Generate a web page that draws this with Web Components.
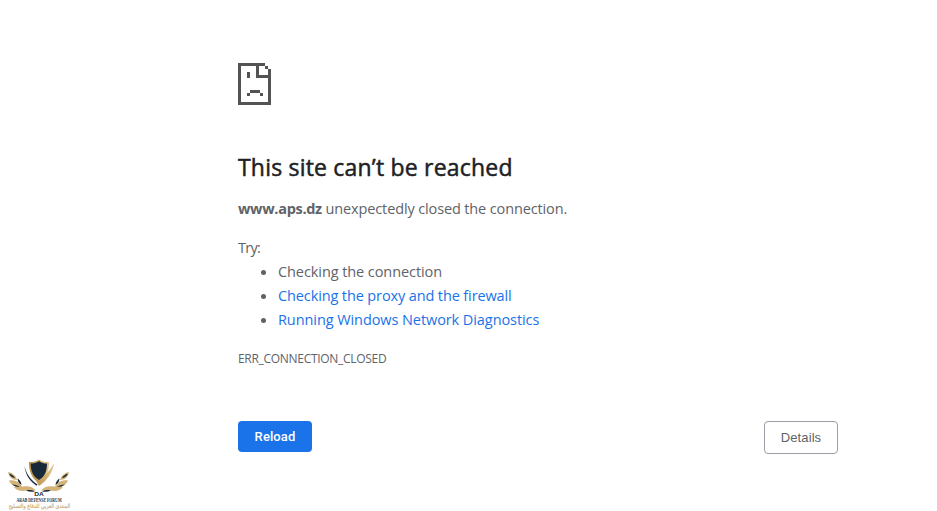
<!DOCTYPE html>
<html lang="en">
<head>
<meta charset="utf-8">
<title>www.aps.dz</title>
<style>
  body {
    background-color: #ffffff;
    color: #5f6368;
    font-family: 'Open Sans', 'Noto Sans', sans-serif;
    margin: 0;
  }
</style>
</head>
<body>
<net-error-page>
  <sad-page slot="icon"></sad-page>
  <span slot="title">This site can’t be reached</span>
  <net-message slot="summary"><strong>www.aps.dz</strong> unexpectedly closed the connection.</net-message>
  <net-suggestions slot="suggestions">
    <net-suggestion style="--spacing: -0.08px">Checking the connection</net-suggestion>
    <net-suggestion link style="--spacing: -0.12px">Checking the proxy and the firewall</net-suggestion>
    <net-suggestion link style="--spacing: -0.08px">Running Windows Network Diagnostics</net-suggestion>
  </net-suggestions>
  <span slot="code">ERR_CONNECTION_CLOSED</span>
  <net-button slot="actions" primary>Reload</net-button>
  <net-button slot="actions">Details</net-button>
</net-error-page>
<forum-mark></forum-mark>

<script>
class NetElement extends HTMLElement {
  constructor() {
    super();

    const template = document.createElement( 'template' );
    template.innerHTML = this.constructor.markup;

    // Root
    const shadowRoot = this.attachShadow( {mode: 'open'} );
    shadowRoot.appendChild( template.content.cloneNode( true ) );
  }
}

class NetErrorPage extends NetElement {
  static markup = /* template */ `
    <style>
      :host {
        box-sizing: border-box;
        display: block;
        margin: 0 99px 0 auto;
        padding-top: 63px;
        width: 600px;
      }

      h1 {
        color: #202124;
        font-size: 23px;
        font-weight: 400;
        letter-spacing: 0.2px;
        line-height: 30px;
        margin: 47px 0 15px;
        white-space: nowrap;
        -webkit-text-stroke: 0.5px #202124;
      }

      .code {
        font-size: 12px;
        letter-spacing: -0.3px;
        line-height: 18px;
        margin-top: 18px;
      }

      nav {
        align-items: flex-start;
        display: flex;
        justify-content: space-between;
        margin-top: 53px;
      }
    </style>
    <slot name="icon"></slot>
    <h1><slot name="title"></slot></h1>
    <slot name="summary"></slot>
    <slot name="suggestions"></slot>
    <div class="code"><slot name="code"></slot></div>
    <nav><slot name="actions"></slot></nav>
  `;
}

// Document with a folded corner
class SadPage extends NetElement {
  static markup = /* template */ `
    <style>
      :host {
        display: block;
        height: 42px;
        width: 33px;
      }

      svg {
        display: block;
      }
    </style>
    <svg width="33" height="42" viewBox="0 0 33 42" fill="#535353" shape-rendering="crispEdges">
      <path d="M0 0h27v3h-6v9h12v3H18V3H3v36h27V15h3v27H0z"/>
      <path d="M27 3h3v3h-3zM30 6h3v9h-3zM9 9h3v6H9zM12 27h10v3H12zM9 30h3v3H9zM22 30h3v3h-3z"/>
    </svg>
  `;
}

class NetMessage extends NetElement {
  static markup = /* template */ `
    <style>
      :host {
        display: block;
        font-size: 14.5px;
        letter-spacing: -0.13px;
        line-height: 24px;
        white-space: nowrap;
      }

      ::slotted( strong ) {
        font-weight: 700;
        letter-spacing: -0.3px;
      }
    </style>
    <slot></slot>
  `;
}

class NetSuggestions extends NetElement {
  static markup = /* template */ `
    <style>
      :host {
        display: block;
        font-size: 14.5px;
        line-height: 24px;
        margin-top: 15px;
      }

      p {
        letter-spacing: -0.7px;
        margin: 0;
      }

      .list {
        display: flex;
        flex-direction: column;
        padding-left: 23px;
      }
    </style>
    <p>Try:</p>
    <div class="list" role="list"><slot></slot></div>
  `;
}

class NetSuggestion extends NetElement {
  static markup = /* template */ `
    <style>
      :host {
        align-items: center;
        display: flex;
        gap: 12px;
        letter-spacing: var( --spacing, normal );
        white-space: nowrap;
      }

      :host( [link] ) .text {
        color: #1a73e8;
      }

      i {
        background-color: #5f6368;
        border-radius: 50%;
        height: 5px;
        margin-top: 1px;
        width: 5px;
      }
    </style>
    <i></i>
    <span class="text"><slot></slot></span>
  `;
}

class NetButton extends NetElement {
  static markup = /* template */ `
    <style>
      :host {
        display: block;
      }

      button {
        background-color: #ffffff;
        border: 1px solid #9aa0a6;
        border-radius: 4px;
        box-sizing: border-box;
        color: #5f6368;
        display: block;
        font: 400 13px 'Liberation Sans', Arial, sans-serif;
        height: 33px;
        letter-spacing: 0.1px;
        padding: 0;
        width: 74px;
      }

      :host( [primary] ) button {
        background-color: #1a73e8;
        border: none;
        color: #ffffff;
        font-family: Roboto, sans-serif;
        font-weight: 500;
        height: 31px;
      }
    </style>
    <button><slot></slot></button>
  `;
}

// Shield between two laurel wings, pinned over the page's lower left corner
class ForumMark extends NetElement {
  static markup = /* template */ `
    <style>
      :host {
        display: block;
        left: 0;
        position: absolute;
        top: 456px;
      }

      svg {
        display: block;
      }
    </style>
    <svg width="80" height="55" viewBox="0 456 80 55">
      <defs>
        <linearGradient id="gold" x1="0" x2="1">
          <stop offset="0" stop-color="#b98d45"/>
          <stop offset="1" stop-color="#e3c78d"/>
        </linearGradient>
        <g id="wing">
          <path fill="#d3b377" d="M8 472c5 1 8 4 9 8-5 0-8-3-9-8zM9 480.500c6-1 10 1 13 6-6 1-11-1-13-6zM14 487c5-2 11-1 14 3-6 2-11 1-14-3zM23 486.500c5-1 10 0 13 4-5 .5-10-.5-13-4z"/>
          <path fill="#182a38" d="M9 473.500c3 1 5 2.500 6 4.500-3-.5-5-2-6-4.500zM17.500 478.500c2.500 1.500 4 4 4 6.500-2.500-1.500-4-4-4-6.500zM12 484.500c3 0 6 1 8 2.500-3 0-6-.8-8-2.500zM26 490.500c3-.7 6-.7 9 .7-3 1-6 .5-9-.7z"/>
        </g>
      </defs>
      <use href="#wing"/>
      <use href="#wing" transform="matrix(-1 0 0 1 77 0)"/>
      <path fill="url(#gold)" d="M29 462c4 .3 7-.5 10-2.500 3 2 6 2.800 10 2.500 0 9-2 16-10 21-8-5-10-12-10-21z"/>
      <path fill="#182a38" d="M30.700 463.500c3 0 6-.7 8.300-2.300 2.300 1.600 5 2.300 8 2.300 0 7-2 13-8 17.500-6-4.500-8.300-10.500-8.300-17.500z"/>
      <path fill="url(#gold)" d="M54 463.500c-1.500 9-6.500 17-15 22.500l-5.500-10 5.500 4c5-3 10-8.500 15-16.500z"/>
      <path fill="#182a38" d="M24.500 466c2 8 6 14 13 18.500l-1 1.200c-6-4-11-10-12-19.700z"/>
      <text transform="translate(39 496) scale(1.100 1)" text-anchor="middle" font-family="Liberation Sans, sans-serif" font-size="6" font-weight="700" fill="#182a38">DA</text>
      <text transform="translate(39 501.500) scale(.700 1)" text-anchor="middle" font-family="Liberation Serif, serif" font-size="5.500" font-weight="700" fill="#273642">ARAB DEFENSE FORUM</text>
      <text transform="translate(39.500 507.500) scale(.800 1)" text-anchor="middle" direction="rtl" font-family="DejaVu Sans, sans-serif" font-size="6" fill="#c9a765" stroke="#c9a765" stroke-width=".15">المنتدى العربي للدفاع والتسليح</text>
    </svg>
  `;
}

window.customElements.define( 'net-error-page', NetErrorPage );
window.customElements.define( 'sad-page', SadPage );
window.customElements.define( 'net-message', NetMessage );
window.customElements.define( 'net-suggestions', NetSuggestions );
window.customElements.define( 'net-suggestion', NetSuggestion );
window.customElements.define( 'net-button', NetButton );
window.customElements.define( 'forum-mark', ForumMark );
</script>
</body>
</html>
